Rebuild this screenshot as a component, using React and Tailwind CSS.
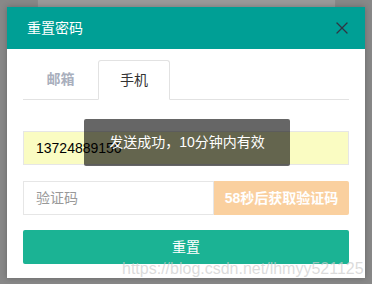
import { X } from "lucide-react";

const cjk = { fontFamily: '"Liberation Sans", "Noto Sans CJK SC", sans-serif' };

export default function App() {
  return (
    <div className="relative w-[372px] h-[284px] bg-[#888888] overflow-hidden" style={cjk}>
      {/* page behind the overlay */}
      <div className="absolute left-[37px] top-0 w-[299px] h-[7px] bg-[#9a9a9a] border-x border-[#8a8a8a]" />

      {/* modal */}
      <div className="absolute left-[7px] top-[7px] w-[358px] h-[271px] bg-white flex flex-col shadow-[0_0_6px_rgba(0,0,0,0.25)]">
        <div className="h-[42px] bg-[#009f95] flex items-center justify-between pl-[20px] pr-[13px]">
          <span className="text-white text-[14px]">重置密码</span>
          <X size={20} strokeWidth={1.5} className="text-[#2f3542]" />
        </div>

        <div className="px-[16px] pt-[11px] flex flex-col">
          <div className="flex border-b border-[#e2e2e2] h-[40px]">
            <div className="w-[75px] flex items-center justify-center text-[14px] font-bold text-[#a9afbd]">邮箱</div>
            <div className="w-[72px] -mb-px flex items-center justify-center text-[14px] text-[#333] bg-white border border-[#e2e2e2] border-b-white rounded-t-[3px]">手机</div>
          </div>

          <div className="mt-[31px] h-[34px] bg-[#fafcc2] border border-[#e6e6e6] flex items-center pl-[12px] text-[14px] text-black">
            13724889156
          </div>

          <div className="mt-[16px] h-[34px] flex">
            <div className="flex-1 border border-[#e6e6e6] flex items-center pl-[12px] text-[14px] text-[#999]">验证码</div>
            <div className="w-[135px] bg-[#fad09f] rounded-r-[2px] flex items-center justify-center text-white text-[14px] font-bold">58秒后获取验证码</div>
          </div>

          <div className="mt-[15px] h-[34px] bg-[#1bb394] rounded-[2px] flex items-center justify-center text-white text-[14px]">
            重置
          </div>
        </div>
      </div>

      {/* toast */}
      <div className="absolute left-[84px] top-[119px] w-[206px] h-[47px] bg-black/60 rounded-[2px] flex items-center justify-center text-white text-[14px]">
        发送成功，10分钟内有效
      </div>

      {/* watermark */}
      <div className="absolute left-[122px] top-[257px] text-[16px] text-[#cccccc]/70 whitespace-nowrap">
        https://blog.csdn.net/lhmyy521125
      </div>
    </div>
  );
}
